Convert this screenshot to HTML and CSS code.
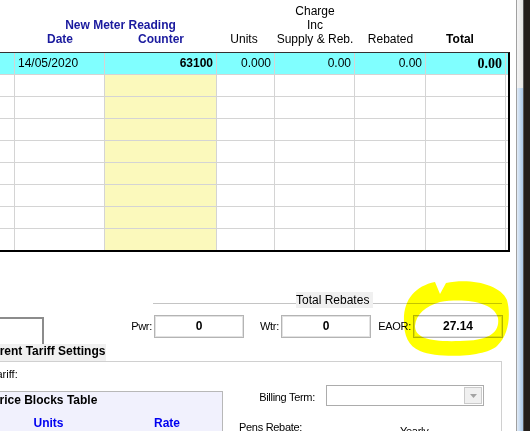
FILE: index.html
```html
<!DOCTYPE html>
<html>
<head>
<meta charset="utf-8">
<link rel="stylesheet" href="styles.css">
</head>
<body>
<div class="screen">
  <div class="main">
    <div class="grid">
      <div class="ghead">
        <div class="hc c0"></div>
        <div class="hgroup">
          <div class="htitle blue">New Meter Reading</div>
          <div class="hsub">
            <div class="hc c1 blue">Date</div>
            <div class="hc c2 blue">Counter</div>
          </div>
        </div>
        <div class="hc c3 hunits">Units</div>
        <div class="hc c4">Charge<br>Inc<br>Supply &amp; Reb.</div>
        <div class="hc c5">Rebated</div>
        <div class="hc c6 htotal">Total</div>
      </div>
      <div class="gbody">
        <div class="row sel">
          <div class="cell c0"></div>
          <div class="cell c1 l">14/05/2020</div>
          <div class="cell c2 r b">63100</div>
          <div class="cell c3 r">0.000</div>
          <div class="cell c4 r">0.00</div>
          <div class="cell c5 r">0.00</div>
          <div class="cell c6 r tot">0.00</div>
        </div>
        <div class="row"><div class="cell c0"></div><div class="cell c1"></div><div class="cell c2"></div><div class="cell c3"></div><div class="cell c4"></div><div class="cell c5"></div><div class="cell c6"></div></div>
        <div class="row"><div class="cell c0"></div><div class="cell c1"></div><div class="cell c2"></div><div class="cell c3"></div><div class="cell c4"></div><div class="cell c5"></div><div class="cell c6"></div></div>
        <div class="row"><div class="cell c0"></div><div class="cell c1"></div><div class="cell c2"></div><div class="cell c3"></div><div class="cell c4"></div><div class="cell c5"></div><div class="cell c6"></div></div>
        <div class="row"><div class="cell c0"></div><div class="cell c1"></div><div class="cell c2"></div><div class="cell c3"></div><div class="cell c4"></div><div class="cell c5"></div><div class="cell c6"></div></div>
        <div class="row"><div class="cell c0"></div><div class="cell c1"></div><div class="cell c2"></div><div class="cell c3"></div><div class="cell c4"></div><div class="cell c5"></div><div class="cell c6"></div></div>
        <div class="row"><div class="cell c0"></div><div class="cell c1"></div><div class="cell c2"></div><div class="cell c3"></div><div class="cell c4"></div><div class="cell c5"></div><div class="cell c6"></div></div>
        <div class="row"><div class="cell c0"></div><div class="cell c1"></div><div class="cell c2"></div><div class="cell c3"></div><div class="cell c4"></div><div class="cell c5"></div><div class="cell c6"></div></div>
        <div class="row"><div class="cell c0"></div><div class="cell c1"></div><div class="cell c2"></div><div class="cell c3"></div><div class="cell c4"></div><div class="cell c5"></div><div class="cell c6"></div></div>
      </div>
    </div>

    <div class="rb-title">
      <div class="rb-line left"></div>
      <div class="rb-legend">Total Rebates</div>
      <div class="rb-line"></div>
    </div>

    <div class="fields">
      <div class="leftbox"></div>
      <div class="flabel f1">Pwr:</div>
      <div class="fbox">0</div>
      <div class="flabel f2">Wtr:</div>
      <div class="fbox">0</div>
      <div class="flabel f3">EAOR:</div>
      <div class="fbox">27.14</div>
    </div>

    <div class="ct-legend">Current Tariff Settings</div>

    <div class="tariff">
      <div class="tleft">
        <div class="tlabel">Tariff:</div>
        <div class="pbox">
          <div class="ptitle">Price Blocks Table</div>
          <div class="phead">
            <div class="ph-units">Units</div>
            <div class="ph-rate">Rate</div>
          </div>
        </div>
      </div>
      <div class="tright">
        <div class="brow">
          <div class="blabel">Billing Term:</div>
          <div class="combo">
            <div class="cbtn">
              <svg width="7" height="4" viewBox="0 0 7 4"><path d="M0 0 H7 L3.5 4 Z" fill="#a3a3a3"/></svg>
            </div>
          </div>
        </div>
        <div class="prow">
          <div class="plabel">Pens Rebate:</div>
          <div class="pval">Yearly</div>
        </div>
      </div>
    </div>
  </div>

  <div class="sbar">
    <div class="sb-track">
      <div class="sb-top"></div>
      <div class="sb-thumb"></div>
    </div>
    <div class="sb-edge"></div>
    <div class="sb-dark"></div>
  </div>

  <svg class="marker" width="530" height="431" viewBox="0 0 530 431">
    <path fill="#ffff00" fill-rule="evenodd" d="M404 322 C403 300 415 286 435 282 L440 294 L446 283 C470 278 500 284 507 300 C511 315 509 335 497 346 C485 357 440 359 420 351 C408 346 404 335 404 322 Z M415 326 C416 314 426 306 440 302 C465 298 494 302 498 318 C500 332 490 341 460 341 C430 342 415 338 415 326 Z"/>
  </svg>
</div>
</body>
</html>
```
FILE: styles.css
```css
* { box-sizing: border-box; }
html, body { margin: 0; padding: 0; }
body {
  width: 530px;
  height: 431px;
  overflow: hidden;
  font-family: "Liberation Sans", Arial, sans-serif;
  font-size: 12px;
  color: #000;
  background: #fff;
}
.screen {
  position: relative;
  display: flex;
  width: 530px;
  height: 431px;
}
.main {
  width: 516px;
  display: flex;
  flex-direction: column;
  overflow: hidden;
  background: #fff;
}
.main > * { flex-shrink: 0; }

/* grid */
.grid { width: 510px; }
.ghead {
  display: flex;
  align-items: flex-end;
  height: 52px;
  padding-bottom: 6px;
  line-height: 14px;
}
.hc { flex: none; text-align: center; }
.c0 { width: 15px; }
.c1 { width: 90px; }
.c2 { width: 112px; }
.c3 { width: 58px; }
.c4 { width: 80px; }
.c5 { width: 71px; }
.c6 { width: 80px; }
.hgroup { width: 202px; display: flex; flex-direction: column; }
.htitle { text-align: center; padding-left: 9px; }
.hsub { display: flex; }
.blue { color: #1a1a9e; font-weight: bold; }
.hunits { padding-right: 4px; }
.htotal { font-weight: bold; padding-right: 12px; }

.gbody {
  border-top: 1px solid #333;
  border-right: 2px solid #000;
  border-bottom: 2px solid #000;
}
.row {
  display: flex;
  height: 22px;
  border-bottom: 1px solid #d4d4d4;
}
.row:last-child { height: 21px; border-bottom: none; }
.cell {
  flex: none;
  border-right: 1px solid #d4d4d4;
  line-height: 21px;
  padding: 0 3px;
  white-space: nowrap;
}
.row .c2 { background: #fbf9bc; }
.row.sel { background: #80ffff; }
.row.sel .c2 { background: transparent; }
.l { text-align: left; }
.r { text-align: right; }
.b { font-weight: bold; }
.tot {
  font-family: "Liberation Serif", "Times New Roman", serif;
  font-weight: bold;
  font-size: 14px;
}

/* total rebates */
.rb-title {
  display: flex;
  margin-top: 40px;
  margin-left: 153px;
  width: 349px;
  height: 16px;
}
.rb-line { flex: 1; margin-top: 11px; border-top: 1px solid #c4c4c4; height: 0; }
.rb-line.left { flex: none; width: 143px; }
.rb-legend {
  background: #f0f0f0;
  padding-right: 4px;
  line-height: 16px;
  white-space: nowrap;
}
.fields {
  display: flex;
  align-items: flex-start;
  margin-top: 7px;
  height: 29px;
}
.leftbox {
  width: 44px;
  height: 27px;
  margin-top: 2px;
  border-top: 2px solid #8c8c8c;
  border-right: 2px solid #8c8c8c;
}
.flabel {
  font-size: 11px;
  letter-spacing: -0.3px;
  text-align: right;
  line-height: 23px;
  height: 23px;
  margin-right: 2px;
  white-space: nowrap;
}
.f1 { width: 108px; }
.f2 { width: 35px; }
.f3 { width: 40px; }
.fbox {
  width: 90px;
  height: 23px;
  border: 1px solid #b4b4b4;
  box-shadow: inset 0 0 0 1px #e2e2e2;
  background: #fff;
  text-align: center;
  font-weight: bold;
  line-height: 21px;
}

/* current tariff */
.ct-legend {
  width: 106px;
  height: 17px;
  background: #f0f0f0;
  font-weight: bold;
  line-height: 15px;
  white-space: nowrap;
  overflow: hidden;
  text-indent: -21px;
}
.tariff {
  display: flex;
  width: 502px;
  height: 80px;
  border-top: 1px solid #d0d0d0;
  border-right: 1px solid #d0d0d0;
}
.tleft { width: 223px; flex: none; padding-top: 6px; }
.tlabel {
  font-size: 11px;
  line-height: 13px;
  white-space: nowrap;
  overflow: hidden;
  text-indent: -9px;
}
.pbox {
  margin-top: 10px;
  width: 223px;
  height: 60px;
  border-top: 1px solid #b8b8b8;
  border-right: 1px solid #b8b8b8;
  background: #f1f1fd;
  overflow: hidden;
}
.ptitle {
  font-weight: bold;
  line-height: 14px;
  padding-top: 1px;
  white-space: nowrap;
  text-indent: -8.5px;
}
.phead {
  display: flex;
  margin-top: 9px;
  line-height: 14px;
  color: #0000f0;
  font-weight: bold;
}
.ph-units { flex: none; width: 97px; text-align: center; }
.ph-rate { flex: none; width: 140px; text-align: center; }

.tright { flex: 1; padding-top: 23px; }
.brow { display: flex; height: 21px; }
.blabel {
  width: 92px;
  flex: none;
  text-align: right;
  font-size: 11px;
  letter-spacing: -0.3px;
  line-height: 21px;
  padding-top: 2px;
  white-space: nowrap;
}
.combo {
  margin-left: 11px;
  width: 158px;
  height: 21px;
  border: 1px solid #acacac;
  background: #fff;
  padding: 1px;
  display: flex;
  justify-content: flex-end;
}
.cbtn {
  width: 18px;
  height: 17px;
  border: 1px solid #cacaca;
  background: #f0f0f0;
  display: flex;
  align-items: center;
  justify-content: center;
}
.cbtn svg { display: block; }
.prow {
  display: flex;
  margin-top: 15px;
  padding-left: 16px;
  font-size: 11px;
  letter-spacing: -0.3px;
  line-height: 13px;
  white-space: nowrap;
}
.plabel { width: 161px; flex: none; }
.pval { margin-top: 4px; }

/* scrollbar */
.sbar {
  width: 14px;
  display: flex;
  border-left: 1px solid #a0a0a0;
}
.sb-track { width: 6px; display: flex; flex-direction: column; }
.sb-top { height: 88px; background: linear-gradient(to right, #f4f4f4, #e4e4e4); }
.sb-thumb { flex: 1; background: linear-gradient(to right, #e2ecf7, #a9c7e8); }
.sb-edge { width: 1px; background: #5a5a5a; }
.sb-dark { flex: 1; background: #231e1b; }

/* freehand highlight */
.marker {
  position: absolute;
  left: 0;
  top: 0;
  pointer-events: none;
  mix-blend-mode: multiply;
}
```
